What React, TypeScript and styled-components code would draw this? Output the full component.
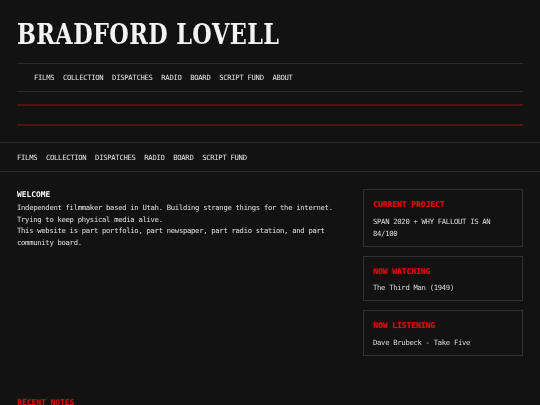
import React from 'react';
import styled, { createGlobalStyle } from 'styled-components';

/* ── Global ── */

const GlobalStyle = createGlobalStyle`
  html, body {
    margin: 0;
    padding: 0;
    background: #121212;
  }
  * { box-sizing: border-box; }
`;

const MONO = `"DejaVu Sans Mono", "Liberation Mono", monospace`;
const RED = '#e00b0b';

/* ── Layout ── */

const Page = styled.div`
  min-height: 100vh;
  background: #121212;
  color: #e2e2e2;
  font-family: ${MONO};
  font-size: 7.2px;
  letter-spacing: -0.28px;
  overflow: hidden;
`;

const Masthead = styled.header`
  padding: 0 17px;
`;

const TitleBox = styled.div`
  height: 63px;
  padding-top: 18px;
`;

const Title = styled.h1`
  display: inline-block;
  margin: 0;
  font-family: "DejaVu Serif", "Liberation Serif", serif;
  font-weight: bold;
  font-size: 28px;
  line-height: 34px;
  letter-spacing: 0.5px;
  color: #f2f2f2;
  white-space: nowrap;
  transform: scaleX(0.8);
  transform-origin: left center;
`;

const Rule = styled.div<{ $red?: boolean; $gapAfter?: number }>`
  height: ${(p) => (p.$red ? 2 : 1)}px;
  background: ${(p) => (p.$red ? '#4e1212' : '#2b2b2b')};
  margin-bottom: ${(p) => p.$gapAfter ?? 0}px;
`;

const NavRow = styled.nav<{ $indent?: number; $height: number }>`
  display: flex;
  align-items: center;
  gap: 8.7px;
  height: ${(p) => p.$height}px;
  padding-left: ${(p) => p.$indent ?? 0}px;
  filter: grayscale(1);
`;

const NavLink = styled.a`
  color: #e4e4e4;
  text-decoration: none;
  text-transform: uppercase;
  white-space: nowrap;
`;

const SiteNav = styled.div`
  border-top: 1px solid #2b2b2b;
  border-bottom: 1px solid #2b2b2b;
  padding: 0 17px;
`;

const Main = styled.main`
  display: grid;
  grid-template-columns: 1fr 160px;
  column-gap: 22px;
  padding: 17px 17px 0;
`;

const Intro = styled.section`
  line-height: 11.5px;
  filter: grayscale(1);
`;

const IntroHeading = styled.h2`
  margin: 0 0 1.5px;
  font-size: 7.9px;
  letter-spacing: 0;
  font-weight: bold;
  color: #ffffff;
`;

const IntroText = styled.p`
  margin: 0;
`;

const Sidebar = styled.aside`
  display: flex;
  flex-direction: column;
  gap: 9px;
`;

const Card = styled.div`
  border: 1px solid #303030;
  padding: 9px 9px 6px;
`;

const CardTitle = styled.h3`
  margin: 0 0 5px;
  font-size: 7.9px;
  letter-spacing: 0;
  font-weight: bold;
  line-height: 11.5px;
  color: ${RED};
  text-shadow: 0 0 3px rgba(224, 11, 11, 0.4);
`;

const CardBody = styled.p`
  margin: 0;
  line-height: 12px;
  color: #dcdcdc;
  filter: grayscale(1);
`;

const NotesHeading = styled.h2`
  margin: 0;
  padding: 42px 17px 0;
  font-size: 7.9px;
  letter-spacing: 0;
  font-weight: bold;
  color: ${RED};
`;

/* ── Data ── */

const mastNav = ['Films', 'Collection', 'Dispatches', 'Radio', 'Board', 'Script Fund', 'About'];
const siteNav = ['Films', 'Collection', 'Dispatches', 'Radio', 'Board', 'Script Fund'];

const cards = [
  { title: 'Current Project', body: 'SPAN 2020 + WHY FALLOUT IS AN 84/100' },
  { title: 'Now Watching', body: 'The Third Man (1949)' },
  { title: 'Now Listening', body: 'Dave Brubeck - Take Five' },
];

export default function App() {
  return (
    <Page>
      <GlobalStyle />
      <Masthead>
        <TitleBox>
          <Title>BRADFORD LOVELL</Title>
        </TitleBox>
        <Rule />
        <NavRow $indent={17} $height={27}>
          {mastNav.map((n) => (
            <NavLink key={n} href="#">{n}</NavLink>
          ))}
        </NavRow>
        <Rule $gapAfter={12} />
        <Rule $red $gapAfter={18} />
        <Rule $red $gapAfter={16} />
      </Masthead>

      <SiteNav>
        <NavRow $height={28}>
          {siteNav.map((n) => (
            <NavLink key={n} href="#">{n}</NavLink>
          ))}
        </NavRow>
      </SiteNav>

      <Main>
        <Intro>
          <IntroHeading>WELCOME</IntroHeading>
          <IntroText>
            Independent filmmaker based in Utah. Building strange things for the internet.
            <br />
            Trying to keep physical media alive.
            <br />
            This website is part portfolio, part newspaper, part radio station, and part community board.
          </IntroText>
        </Intro>
        <Sidebar>
          {cards.map((c) => (
            <Card key={c.title}>
              <CardTitle>{c.title.toUpperCase()}</CardTitle>
              <CardBody>{c.body}</CardBody>
            </Card>
          ))}
        </Sidebar>
      </Main>

      <NotesHeading>RECENT NOTES</NotesHeading>
    </Page>
  );
}
